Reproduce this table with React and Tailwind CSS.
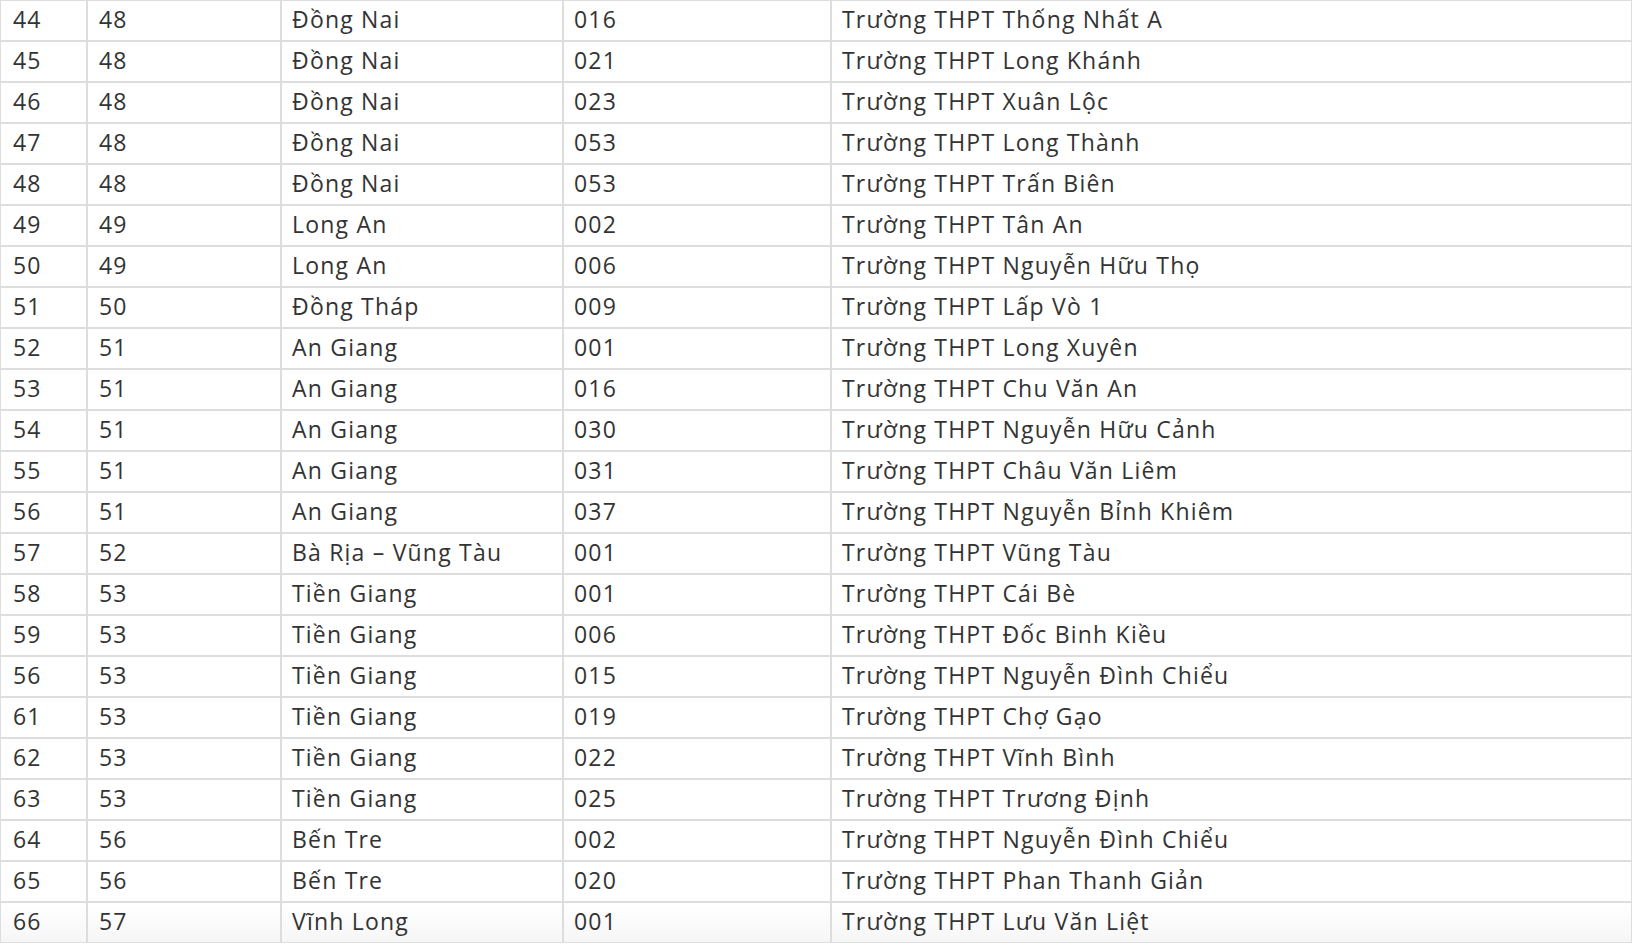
import React from "react";

const rows = [
  ["44", "48", "Đồng Nai", "016", "Trường THPT Thống Nhất A"],
  ["45", "48", "Đồng Nai", "021", "Trường THPT Long Khánh"],
  ["46", "48", "Đồng Nai", "023", "Trường THPT Xuân Lộc"],
  ["47", "48", "Đồng Nai", "053", "Trường THPT Long Thành"],
  ["48", "48", "Đồng Nai", "053", "Trường THPT Trấn Biên"],
  ["49", "49", "Long An", "002", "Trường THPT Tân An"],
  ["50", "49", "Long An", "006", "Trường THPT Nguyễn Hữu Thọ"],
  ["51", "50", "Đồng Tháp", "009", "Trường THPT Lấp Vò 1"],
  ["52", "51", "An Giang", "001", "Trường THPT Long Xuyên"],
  ["53", "51", "An Giang", "016", "Trường THPT Chu Văn An"],
  ["54", "51", "An Giang", "030", "Trường THPT Nguyễn Hữu Cảnh"],
  ["55", "51", "An Giang", "031", "Trường THPT Châu Văn Liêm"],
  ["56", "51", "An Giang", "037", "Trường THPT Nguyễn Bỉnh Khiêm"],
  ["57", "52", "Bà Rịa – Vũng Tàu", "001", "Trường THPT Vũng Tàu"],
  ["58", "53", "Tiền Giang", "001", "Trường THPT Cái Bè"],
  ["59", "53", "Tiền Giang", "006", "Trường THPT Đốc Binh Kiều"],
  ["56", "53", "Tiền Giang", "015", "Trường THPT Nguyễn Đình Chiểu"],
  ["61", "53", "Tiền Giang", "019", "Trường THPT Chợ Gạo"],
  ["62", "53", "Tiền Giang", "022", "Trường THPT Vĩnh Bình"],
  ["63", "53", "Tiền Giang", "025", "Trường THPT Trương Định"],
  ["64", "56", "Bến Tre", "002", "Trường THPT Nguyễn Đình Chiểu"],
  ["65", "56", "Bến Tre", "020", "Trường THPT Phan Thanh Giản"],
  ["66", "57", "Vĩnh Long", "001", "Trường THPT Lưu Văn Liệt"],
];

const pads = ["pl-[12px]", "pl-[11px]", "pl-[10px]", "pl-[10px]", "pl-[10px]"];

export default function App() {
  return (
    <div
      className="w-[1632px] h-[946px] bg-white overflow-hidden text-[#333333] text-[23px] tracking-[1.2px]"
      style={{ fontFamily: "'Open Sans', Lato, sans-serif" }}
    >
      <div className="grid grid-cols-[87px_194px_282px_268px_1fr]">
        {rows.map((r, i) => (
          <React.Fragment key={i}>
            {r.map((c, j) => (
              <div
                key={j}
                className={`h-[41px] border border-[#dddddd] flex items-center pb-[2px] whitespace-nowrap leading-none ${pads[j]} ${
                  i === rows.length - 1 ? "bg-gradient-to-b from-white to-[#f6f6f6]" : ""
                }`}
              >
                {c}
              </div>
            ))}
          </React.Fragment>
        ))}
      </div>
    </div>
  );
}
